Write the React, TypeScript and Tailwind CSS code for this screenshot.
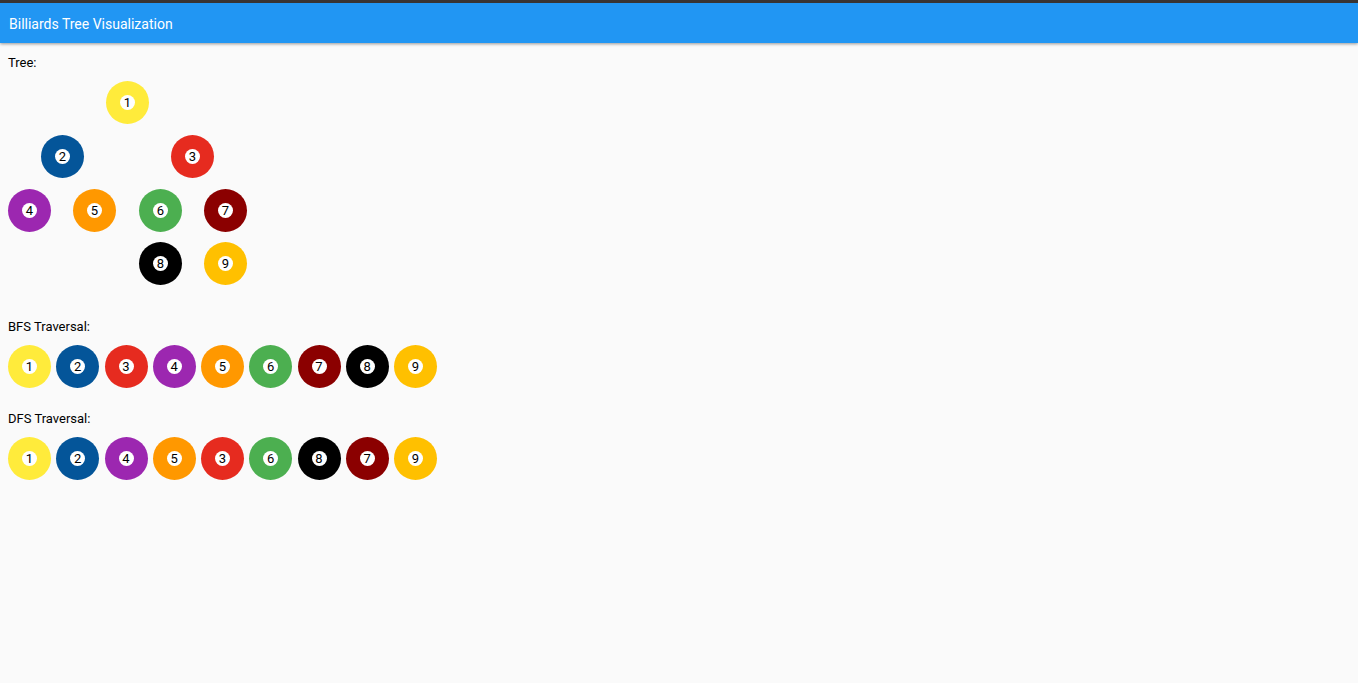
type TreeNode = {
  value: number;
  x: number;
  y: number;
};

const ballColors: Record<number, string> = {
  1: "bg-[#ffeb3b]",
  2: "bg-[#045599]",
  3: "bg-[#e62b1f]",
  4: "bg-[#9c27b0]",
  5: "bg-[#ff9800]",
  6: "bg-[#4caf50]",
  7: "bg-[#8b0000]",
  8: "bg-black",
  9: "bg-[#ffc000]",
};

const treeNodes: TreeNode[] = [
  { value: 1, x: 98, y: 0 },
  { value: 2, x: 33, y: 54 },
  { value: 3, x: 163, y: 54 },
  { value: 4, x: 0, y: 108 },
  { value: 5, x: 65, y: 108 },
  { value: 6, x: 131, y: 108 },
  { value: 7, x: 196, y: 108 },
  { value: 8, x: 131, y: 161 },
  { value: 9, x: 196, y: 161 },
];

const bfsOrder = [1, 2, 3, 4, 5, 6, 7, 8, 9];
const dfsOrder = [1, 2, 4, 5, 3, 6, 8, 7, 9];

function Ball({ value }: { value: number }) {
  return (
    <div
      className={`flex size-[43px] shrink-0 items-center justify-center rounded-full ${ballColors[value]}`}
    >
      <span className="flex size-[15px] items-center justify-center rounded-full bg-white text-[13px] leading-none text-black">
        {value}
      </span>
    </div>
  );
}

function SectionTitle({ children }: { children: React.ReactNode }) {
  return <h2 className="mb-2 text-[13px] leading-5 text-black">{children}</h2>;
}

function Traversal({ title, order }: { title: string; order: number[] }) {
  return (
    <section>
      <SectionTitle>{title}</SectionTitle>
      <ol className="flex w-full max-w-[429px] justify-between">
        {order.map((value) => (
          <li key={value}>
            <Ball value={value} />
          </li>
        ))}
      </ol>
    </section>
  );
}

export default function App() {
  return (
    <div className="min-h-screen bg-[#fafafa] font-[Roboto,sans-serif]">
      {/* App bar */}
      <header className="border-t-3 border-[#383433] bg-[#2196f3] px-[9px] pt-0.5 shadow-[0_1px_3px_rgba(0,0,0,0.4)]">
        <h1 className="text-sm leading-[38px] text-white">Billiards Tree Visualization</h1>
      </header>

      <main className="flex flex-col gap-[21px] px-2 pt-[10px]">
        <section>
          <SectionTitle>Tree:</SectionTitle>
          {/* Nodes are placed by their own coordinates on the canvas */}
          <div className="relative h-[215px]">
            {treeNodes.map((node) => (
              <div key={node.value} className="absolute" style={{ left: node.x, top: node.y }}>
                <Ball value={node.value} />
              </div>
            ))}
          </div>
        </section>

        <Traversal title="BFS Traversal:" order={bfsOrder} />
        <Traversal title="DFS Traversal:" order={dfsOrder} />
      </main>
    </div>
  );
}
